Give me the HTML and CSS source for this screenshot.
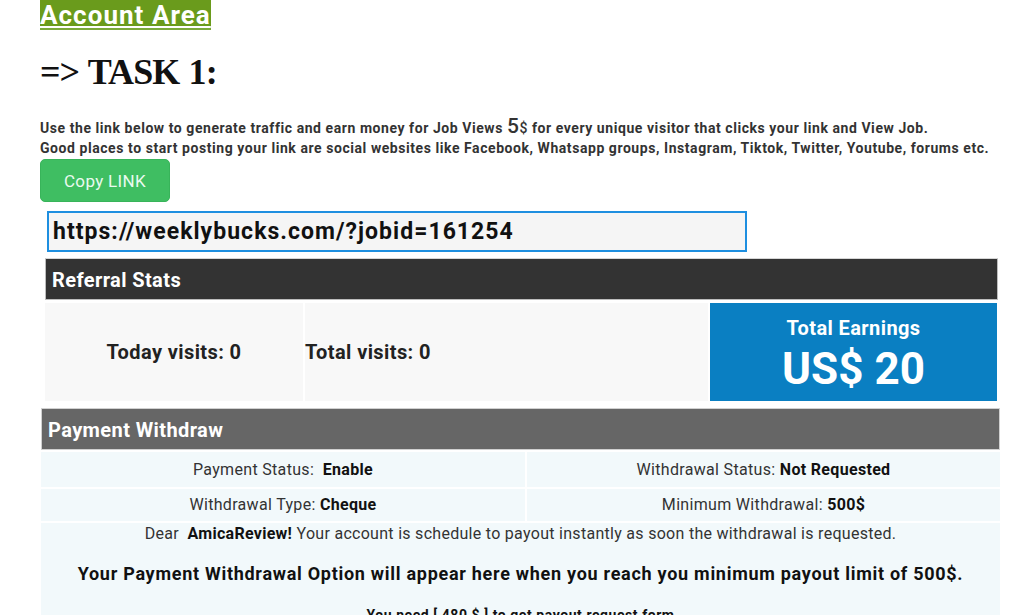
FILE: index.html
```html
<!DOCTYPE html>
<html>
<head>
<meta charset="utf-8">
<link rel="stylesheet" href="styles.css">
</head>
<body>
<div class="page">
  <div class="area-row"><a class="area" href="#">Account Area</a></div>
  <h1 class="task">=&gt; TASK 1:</h1>
  <p class="intro">Use the link below to generate traffic and earn money for Job Views <span class="big5">5</span><span class="dollar">$</span> for every unique visitor that clicks your link and View Job.<br>Good places to start posting your link are social websites like Facebook, Whatsapp groups, Instagram, Tiktok, Twitter, Youtube, forums etc.</p>
  <button class="copy">Copy LINK</button>
  <div class="link-box">https://weeklybucks.com/?jobid=161254</div>

  <div class="ref">
    <div class="ref-head">Referral Stats</div>
    <div class="ref-row">
      <div class="cell today">Today visits: 0</div>
      <div class="cell total">Total visits: 0</div>
      <div class="cell earn">
        <div class="earn-title">Total Earnings</div>
        <div class="earn-val">US$ 20</div>
      </div>
    </div>
  </div>

  <div class="pay">
    <div class="pay-head">Payment Withdraw</div>
    <div class="pay-grid">
      <div class="pcell">Payment Status:&nbsp; <b>Enable</b></div>
      <div class="pcell">Withdrawal Status: <b>Not Requested</b></div>
      <div class="pcell">Withdrawal Type: <b>Cheque</b></div>
      <div class="pcell">Minimum Withdrawal: <b>500$</b></div>
    </div>
    <div class="pay-body">
      <p class="dear">Dear&nbsp; <b>AmicaReview!</b> Your account is schedule to payout instantly as soon the withdrawal is requested.</p>
      <p class="option">Your Payment Withdrawal Option will appear here when you reach you minimum payout limit of 500$.</p>
      <p class="need">You need [ 480 $ ] to get payout request form</p>
    </div>
  </div>
</div>
</body>
</html>
```
FILE: styles.css
```css
html, body {
  margin: 0;
  padding: 0;
  background: #ffffff;
}
body {
  font-family: Roboto, "Liberation Sans", Arial, sans-serif;
  color: #333333;
  overflow: hidden;
}
.page {
  padding-left: 40px;
  width: 961px;
}
.area-row {
  height: 30px;
}
.area {
  display: inline-block;
  background: #6a9b1c;
  color: #ffffff;
  font-weight: 700;
  font-size: 26px;
  letter-spacing: 0.04em;
  line-height: 30px;
  text-decoration: underline;
  text-decoration-thickness: 2px;
  text-underline-offset: 2px;
  border-bottom: 2px solid #7aa83a;
  height: 28px;
}
.task {
  font-family: "Liberation Serif", "Times New Roman", serif;
  font-weight: 700;
  font-size: 36px;
  letter-spacing: -0.9px;
  word-spacing: 1px;
  line-height: 40px;
  color: #111111;
  margin: 22px 0 0 0;
  height: 40px;
}
.intro {
  margin: 26px 0 0 0;
  font-size: 14px;
  font-weight: 700;
  letter-spacing: 0.04em;
  line-height: 20px;
  color: #333333;
}
.big5 {
  font-size: 21px;
  font-weight: 500;
  line-height: 14px;
  letter-spacing: 0.5px;
}
.dollar {
  font-weight: 500;
}
.copy {
  display: block;
  margin: 1px 0 0 0;
  width: 130px;
  height: 43px;
  background: #3fbe62;
  border: 1px solid #38b45a;
  border-radius: 5px;
  color: #eafaf0;
  font-family: Roboto, "Liberation Sans", Arial, sans-serif;
  font-size: 17px;
  font-weight: 400;
  letter-spacing: 0.02em;
  padding: 0;
}
.link-box {
  margin: 9px 0 0 7px;
  width: 692px;
  height: 37px;
  border: 2px solid #1e8fe0;
  background: #f5f5f5;
  font-size: 23px;
  font-weight: 700;
  letter-spacing: 0.045em;
  line-height: 37px;
  color: #111111;
  padding-left: 4px;
  box-sizing: content-box;
}
.ref {
  margin: 6px 0 0 5px;
  width: 953px;
}
.ref-head {
  background: #333333;
  color: #ffffff;
  font-size: 20px;
  font-weight: 700;
  letter-spacing: 0.02em;
  height: 42px;
  line-height: 42px;
  padding-left: 6px;
  border: 1px solid #bdbdbd;
  border-top-color: #d6d6d6;
  box-sizing: border-box;
}
.ref-row {
  display: grid;
  grid-template-columns: 258px 403px 1fr;
  column-gap: 2px;
  margin-top: 3px;
  height: 98px;
}
.cell {
  background: #f8f8f8;
  font-size: 20px;
  font-weight: 700;
  letter-spacing: 0.02em;
  color: #222222;
  display: flex;
  align-items: center;
}
.today {
  justify-content: center;
}
.total {
  justify-content: flex-start;
}
.earn {
  background: #0a7fc2;
  color: #ffffff;
  flex-direction: column;
  justify-content: flex-start;
  align-items: center;
  margin-right: 1px;
}
.earn-title {
  font-size: 20px;
  font-weight: 700;
  margin-top: 14px;
  line-height: 22px;
}
.earn-val {
  font-size: 44px;
  font-weight: 700;
  letter-spacing: 0;
  line-height: 52px;
  margin-top: 4px;
}
.pay {
  margin: 7px 0 0 1px;
  width: 959px;
}
.pay-head {
  background: #666666;
  color: #ffffff;
  font-size: 20px;
  font-weight: 700;
  letter-spacing: 0.02em;
  height: 42px;
  line-height: 42px;
  padding-left: 6px;
  border: 1px solid #d0d0d0;
  box-sizing: border-box;
}
.pay-grid {
  display: grid;
  grid-template-columns: 484px 1fr;
  gap: 2px;
  margin-top: 2px;
}
.pcell {
  background: #f2f9fb;
  text-align: center;
  font-size: 16px;
  letter-spacing: 0.02em;
  height: 35px;
  line-height: 35px;
  color: #333333;
}
.pcell:nth-child(n+3) {
  height: 32px;
  line-height: 32px;
}
.pcell b {
  color: #111111;
}
.pay-body {
  background: #f2f9fb;
  text-align: center;
  height: 200px;
  margin-top: 2px;
}
.pay-body p {
  margin: 0;
}
.dear {
  font-size: 16px;
  letter-spacing: 0.018em;
  line-height: 22px;
  color: #333333;
}
.dear b {
  color: #111111;
}
.option {
  font-size: 18px;
  font-weight: 700;
  letter-spacing: 0.04em;
  color: #111111;
  line-height: 24px;
  padding-top: 17px;
}
.need {
  font-size: 14px;
  font-weight: 700;
  letter-spacing: 0.04em;
  color: #111111;
  line-height: 20px;
  padding-top: 19px;
}
```
